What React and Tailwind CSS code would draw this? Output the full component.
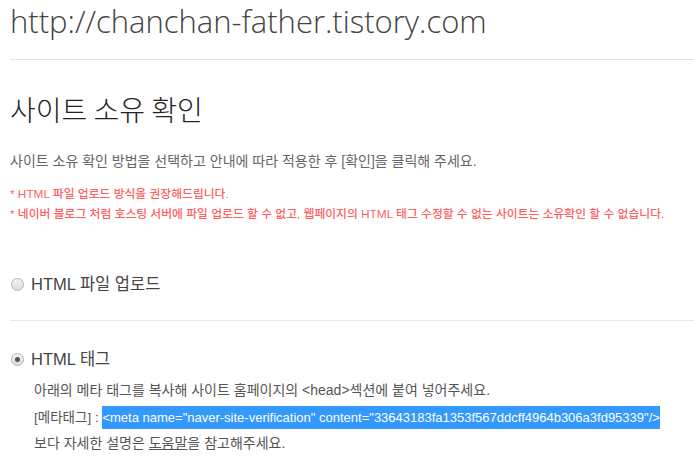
import React from 'react';

const body = { fontFamily: '"Liberation Sans", "Noto Sans CJK KR", sans-serif' };

const Radio = ({ checked }) => (
  <span className="inline-flex items-center justify-center w-[13px] h-[13px] rounded-full border border-[#b4b4b4] bg-gradient-to-b from-[#f4f4f4] to-[#dcdcdc]">
    {checked && <span className="w-[5px] h-[5px] rounded-full bg-[#555]" />}
  </span>
);

export default function App() {
  return (
    <div className="w-[694px] h-[460px] overflow-hidden bg-white pl-[10px]" style={body}>
      <h1
        className="text-[31px] leading-[40px] pt-[1px] text-[#444] font-light"
        style={{ fontFamily: '"Open Sans", sans-serif' }}
      >
        http://chanchan-father.tistory.com
      </h1>
      <div className="mt-[18px] border-t border-[#e3e3e3]" />

      <h2 className="mt-[33px] text-[28px] leading-[32px] text-[#222] font-light" style={{ fontFamily: '"Noto Sans CJK KR", sans-serif' }}>
        사이트 소유 확인
      </h2>

      <p className="mt-[27px] text-[14px] leading-[18px] text-[#666]">
        사이트 소유 확인 방법을 선택하고 안내에 따라 적용한 후 [확인]을 클릭해 주세요.
      </p>

      <div className="mt-[14px] text-[11.8px] leading-[20px] text-[#ff5f5f] font-medium">
        <p>* HTML 파일 업로드 방식을 권장해드립니다.</p>
        <p>* 네이버 블로그 처럼 호스팅 서버에 파일 업로드 할 수 없고, 웹페이지의 HTML 태그 수정할 수 없는 사이트는 소유확인 할 수 없습니다.</p>
      </div>

      <div className="mt-[48px] flex items-center gap-[7px] text-[16.5px] leading-[24px] text-[#444] pl-[1px]">
        <Radio />
        <span>HTML 파일 업로드</span>
      </div>

      <div className="mt-[24px] border-t border-[#e8e8e8]" />

      <div className="mt-[26px] flex items-center gap-[7px] text-[16.5px] leading-[24px] text-[#444] pl-[1px]">
        <Radio checked />
        <span>HTML 태그</span>
      </div>

      <div className="mt-[6px] pl-[24px] text-[14px] text-[#555]">
        <p className="leading-[26px]">아래의 메타 태그를 복사해 사이트 홈페이지의 &lt;head&gt;섹션에 붙여 넣어주세요.</p>
        <p className="leading-[28px]">
          <span className="text-[13.5px]">[메타태그] : </span>
          <span className="bg-[#3399ff] text-white text-[13px] py-[4px]">
            &lt;meta name="naver-site-verification" content="33643183fa1353f567ddcff4964b306a3fd95339"/&gt;
          </span>
        </p>
        <p className="leading-[22px]">
          보다 자세한 설명은 <span className="underline">도움말</span>을 참고해주세요.
        </p>
      </div>
    </div>
  );
}
